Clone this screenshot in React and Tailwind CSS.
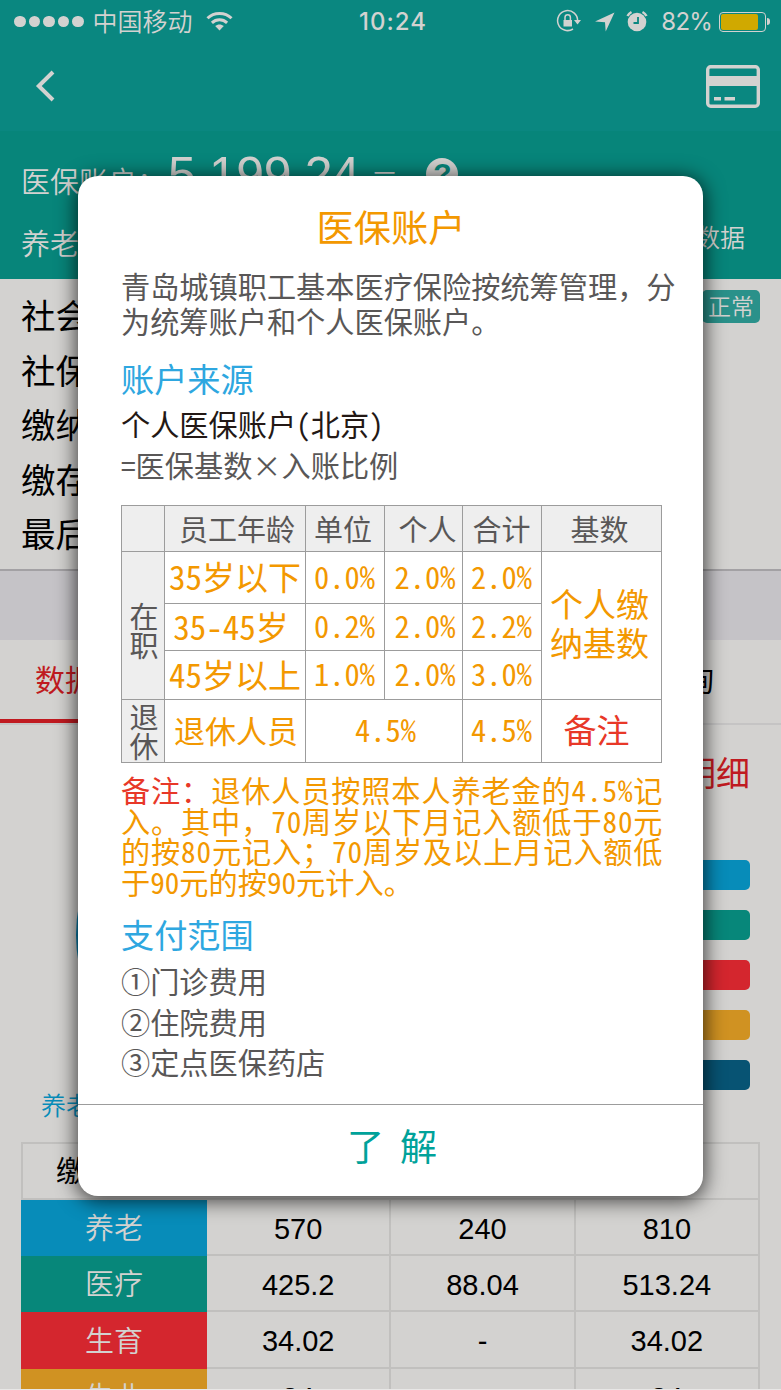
import { clsx } from 'clsx';

const details = ['社会', '社保', '缴纳', '缴存', '最后'];

const legend = ['bg-[#078cb9]', 'bg-[#07877a]', 'bg-[#d4262e]', 'bg-[#d09222]', 'bg-[#075373]'];

const payments = [
  { name: '养老', color: 'h-[56px] bg-[#078cb9]', values: ['570', '240', '810'] },
  { name: '医疗', color: 'h-[56px] bg-[#07877a]', values: ['425.2', '88.04', '513.24'] },
  { name: '生育', color: 'h-[57px] bg-[#d4262e]', values: ['34.02', '-', '34.02'] },
  { name: '失业', color: 'h-[56px] bg-[#d09222]', values: ['34', '', '34'] },
];

const StatusBar = () => (
  <div className="flex h-[43px] items-center bg-[#0a8780] pl-[14px] pr-[11px]">
    <div className="flex flex-1 items-center">
      <div className="flex gap-[3px]">
        {[0, 1, 2, 3, 4].map((i) => (
          <span key={i} className="size-[11.5px] rounded-full bg-[#d3d2d0]" />
        ))}
      </div>
      <span className="ml-[9px] pb-[3px] text-[25px] font-[350] leading-none">中国移动</span>
      <svg className="ml-[13px] mb-[2px]" width="27" height="20" viewBox="0 0 27 20" fill="none" stroke="#d3d2d0" strokeWidth="3">
        <path d="M1.500 7.300C8 .9 19 .9 25.500 7.300" />
        <path d="M5.900 11.800c4.300-4 10.900-4 15.200 0" />
        <path d="M9.200 15.100c2.400-2.300 6.200-2.300 8.600 0L13.500 19.500z" fill="#d3d2d0" stroke="none" />
      </svg>
    </div>
    <span className="pl-[2px] font-[Inter] text-[24px] font-medium leading-none tracking-[1px]">10:24</span>
    <div className="flex flex-1 items-center justify-end">
      <svg className="mb-[2px]" width="26" height="24" viewBox="0 0 26 24" fill="none" stroke="#d3d2d0" strokeWidth="1.5">
        <path d="M21.600 12A10 10 0 1 0 17 20" />
        <path d="M18 11h7l-3.500 4.500z" fill="#d3d2d0" stroke="none" />
        <rect x="7.500" y="11" width="8.500" height="6.500" fill="#d3d2d0" stroke="none" />
        <path d="M9 11V8.500a2.700 2.700 0 0 1 5.400 0V11" />
      </svg>
      <svg className="ml-[13px]" width="20" height="20" viewBox="0 0 20 20" fill="#d3d2d0">
        <path d="M19.500.5 0 9.500l10 .8.7 9.200z" />
      </svg>
      <svg className="mb-[2px] ml-[11px]" width="22" height="22" viewBox="0 0 22 22" fill="none">
        <circle cx="11" cy="12" r="9.300" fill="#d3d2d0" />
        <path d="M1.500 6A9 9 0 0 1 5.500 2M20.500 6a9 9 0 0 0-4-4" stroke="#d3d2d0" strokeWidth="2.500" />
        <path d="M12 7v6H7.500" stroke="#0a8780" strokeWidth="1.800" />
      </svg>
      <span className="ml-[13px] font-[Inter] text-[24px] leading-none tracking-[-0.8px]">82%</span>
      <div className="ml-[7px] h-[20px] w-[47px] rounded-[4px] border border-[#d3d2d0] p-px">
        <div className="h-full w-[37px] rounded-[2px] bg-[#d0a900]" />
      </div>
      <span className="ml-[1px] h-[7px] w-[3px] rounded-r-full bg-[#d3d2d0]" />
    </div>
  </div>
);

const TopBar = () => (
  <div className="flex h-[88px] items-center justify-between bg-[#0a8780] pb-[2px] pl-[35px] pr-[21px]">
    <svg width="20" height="32" viewBox="0 0 20 32" fill="none" stroke="#d3d2d0" strokeWidth="4">
      <path d="M18 2 3.800 16 18 30" />
    </svg>
    <svg width="54" height="43" viewBox="0 0 54 43" fill="none">
      <rect x="1.700" y="1.700" width="50.600" height="39.600" rx="3" stroke="#d3d2d0" strokeWidth="3.400" />
      <path d="M1.500 11h51v10h-51zM8 32h7v3.500H8zM18.500 32h10.500v3.500H18.500z" fill="#d3d2d0" />
    </svg>
  </div>
);

const Balance = () => (
  <div className="h-[148px] bg-[#07857a] px-[21px] font-[350]">
    <div className="flex h-[84px] pt-[17px]">
      <span className="pt-[12px] text-[29px] leading-[40px]">医保账户：</span>
      <span className="ml-[2px] font-['Liberation_Sans'] text-[50px] leading-[54px] tracking-[-0.4px]">5,199.24</span>
      <span className="ml-[11px] pt-[14px] text-[28px] leading-[40px]">元</span>
      <span className="ml-[28px] mt-[10px] flex size-[32px] items-center justify-center rounded-full bg-[#d3d2d0] font-['Liberation_Sans'] text-[30px] font-bold leading-none text-[#07857a]">
        ?
      </span>
    </div>
    <div className="flex justify-between pr-[15px]">
      <span className="text-[29px] leading-[54px]">养老</span>
      <span className="text-[25px] leading-[42px]">数据</span>
    </div>
  </div>
);

const PaymentTable = () => (
  <div className="mx-[21px] border-t-2 border-[#c1c0be] text-[29px] leading-none text-black">
    <div className="flex h-[56px] items-center border-x-2 border-b-2 border-[#c1c0be] pb-1 pl-[33px]">缴</div>
    {payments.map((row) => (
      <div key={row.name} className="flex">
        <div className={clsx('flex w-[186px] items-center justify-center pb-[3px] font-[350] text-[#d3d2d0]', row.color)}>
          {row.name}
        </div>
        {row.values.map((value, i) => (
          <div
            key={i}
            className="flex flex-1 items-center justify-center border-b-2 border-r-2 border-[#c1c0be] pt-1 font-['Liberation_Sans']"
          >
            {value}
          </div>
        ))}
      </div>
    ))}
  </div>
);

const cell = 'flex items-center justify-center border-b border-r border-[#9c9c9c]';
const head = 'bg-[#eee] text-[29px] text-[#595757]';
const age = "pb-[2px] font-['Noto_Sans_Mono_CJK_SC'] text-[33px]";
const rate = "pb-[3px] pr-px font-['Noto_Sans_Mono_CJK_SC'] text-[30.5px]";

const RateTable = () => (
  <div className="mt-[19px] grid w-[541px] grid-cols-[43px_141px_79px_78px_79px_120px] grid-rows-[46px_52px_47px_49px_63px] border-l border-t border-[#9c9c9c] leading-none text-[#f39800]">
    <div className={clsx(cell, head)} />
    <div className={clsx(cell, head, 'pb-px pl-1')}>员工年龄</div>
    <div className={clsx(cell, head, 'pb-px pr-1')}>单位</div>
    <div className={clsx(cell, head, 'pb-px pl-2')}>个人</div>
    <div className={clsx(cell, head, 'pb-px pr-px')}>合计</div>
    <div className={clsx(cell, head, 'pb-px pr-1')}>基数</div>

    <div className={clsx(cell, head, 'row-span-3 pl-0.5 pt-2 text-center')}>在<br />职</div>
    <div className={clsx(cell, age)}>35岁以下</div>
    <div className={clsx(cell, rate)}>0.0%</div>
    <div className={clsx(cell, rate, 'pl-1')}>2.0%</div>
    <div className={clsx(cell, rate)}>2.0%</div>
    <div className={clsx(cell, 'row-span-3 pb-[6px] pr-1 text-center text-[33px] leading-[39px]')}>个人缴<br />纳基数</div>

    <div className={clsx(cell, age, 'pr-2')}>35-45岁</div>
    <div className={clsx(cell, rate)}>0.2%</div>
    <div className={clsx(cell, rate, 'pl-1')}>2.0%</div>
    <div className={clsx(cell, rate)}>2.2%</div>

    <div className={clsx(cell, age)}>45岁以上</div>
    <div className={clsx(cell, rate)}>1.0%</div>
    <div className={clsx(cell, rate, 'pl-1')}>2.0%</div>
    <div className={clsx(cell, rate)}>3.0%</div>

    <div className={clsx(cell, head, 'pl-0.5 text-center')}>退<br />休</div>
    <div className={clsx(cell, 'pb-1 pl-0.5 text-[31px]')}>退休人员</div>
    <div className={clsx(cell, rate, 'col-span-2 pl-1')}>4.5%</div>
    <div className={clsx(cell, rate)}>4.5%</div>
    <div className={clsx(cell, 'pb-1 pr-[10px] text-[33px] text-[#e83828]')}>备注</div>
  </div>
);

const AccountDialog = () => (
  <div className="absolute left-[78px] top-[176px] flex h-[1020px] w-[625px] flex-col rounded-[20px] bg-white text-[29.2px] text-[#595757] shadow-[0_3px_20px_2px_rgba(0,0,0,0.7)]">
    <div className="flex-1 whitespace-nowrap pl-[43px]">
      <h1 className="mt-[30px] pr-[42px] text-center text-[37.3px] leading-[40px] text-[#f39800]">医保账户</h1>
      <p className="mt-[22px] leading-[35px]">
        青岛城镇职工基本医疗保险按统筹管理，分
        <br />
        为统筹账户和个人医保账户。
      </p>
      <h2 className="mt-[20px] text-[33.2px] leading-[40px] text-[#2ea7e0]">账户来源</h2>
      <p className="mt-[5px] font-['Noto_Sans_Mono_CJK_SC'] leading-[40px] text-[#231815]">个人医保账户(北京)</p>
      <p className="font-['Noto_Sans_Mono_CJK_SC'] leading-[43px]">=医保基数×入账比例</p>
      <RateTable />
      <p className="mt-[11px] font-['Noto_Sans_Mono_CJK_SC'] leading-[30.6px] tracking-[0.85px] text-[#f39800]">
        <span className="text-[#e83828]">备注：</span>退休人员按照本人养老金的4.5%记
        <br />
        入。其中，70周岁以下月记入额低于80元
        <br />
        的按80元记入；70周岁及以上月记入额低
        <br />
        <span className="tracking-normal">于90元的按90元计入。</span>
      </p>
      <h2 className="mt-[18px] text-[33.2px] leading-[40px] text-[#2ea7e0]">支付范围</h2>
      <ul className="mt-[6px] leading-[40.5px]">
        <li>①门诊费用</li>
        <li>②住院费用</li>
        <li>③定点医保药店</li>
      </ul>
    </div>
    <button className="h-[92px] border-t border-[#9c9c9c] pb-[10px] pl-[3px] text-[37px] text-[#00a29a]">
      了<span className="inline-block w-[16px]" />解
    </button>
  </div>
);

const App = () => (
  <div className="relative h-[1390px] w-[781px] overflow-hidden border-b border-[#e8e7e6] bg-[#d3d2d0] font-['Noto_Sans_CJK_SC',sans-serif] text-[#d3d2d0]">
    <StatusBar />
    <TopBar />
    <Balance />

    <div className="flex h-[292px] justify-between border-b-2 border-[#a3a1a4] px-[21px] pt-[8px] text-black">
      <div className="text-[34.5px] leading-[54.5px]">
        {details.map((label) => (
          <div key={label}>{label}</div>
        ))}
      </div>
      <span className="mt-[3px] h-[33px] rounded-[5px] bg-[#2a918a] px-[6px] text-[23px] font-[350] leading-[31px] text-[#d3d2d0]">
        正常
      </span>
    </div>
    <div className="h-[69px] bg-[#c5c3c7]" />

    <div className="flex h-[85px] border-b-2 border-[#c5c4c4] text-[30px] leading-[76px]">
      <div className="h-[83px] w-[260px] border-b-4 border-[#c01a20] pl-[35px] text-[#c01a20]">数据</div>
      <div className="flex-1 pr-[67px] text-right text-black">询</div>
    </div>

    <div className="flex h-[360px] justify-between pl-[76px] pr-[31px]">
      <div className="mt-[53px] size-[314px] rounded-full bg-[#0780af]" />
      <div className="flex flex-col items-end pt-[27px]">
        <span className="text-[34px] leading-[40px] text-[#c01a20]">明细</span>
        <div className="mt-[68px] flex flex-col gap-5">
          {legend.map((color) => (
            <span key={color} className={clsx('h-[30px] w-[80px] rounded-[5px]', color)} />
          ))}
        </div>
      </div>
    </div>
    <div className="h-[57px] pl-[41px] text-[25px] font-[350] leading-[38px] text-[#078cb9]">养老</div>
    <PaymentTable />

    <AccountDialog />
  </div>
);

export default App;
